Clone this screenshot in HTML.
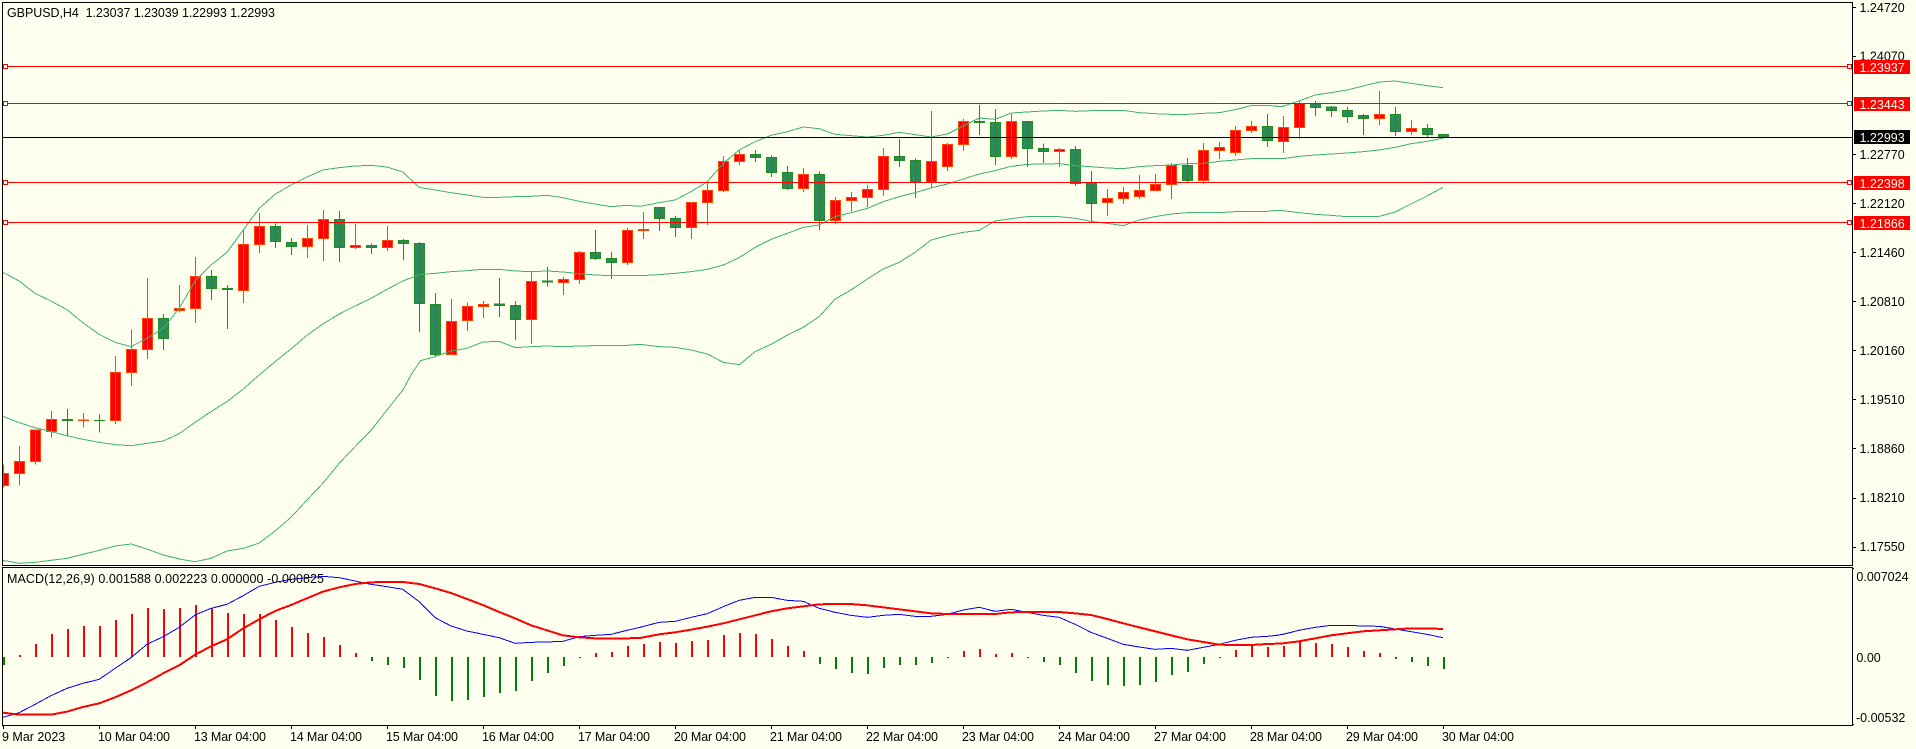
<!DOCTYPE html>
<html>
<head>
<meta charset="utf-8">
<title>GBPUSD,H4</title>
<style>
html,body{margin:0;padding:0;background:#fffff0;width:1916px;height:749px;overflow:hidden}
svg{display:block}
text{font-family:"Liberation Sans",sans-serif;font-size:12.5px;fill:#000}
.t text{fill:#fffff0}
.r path{fill:#f00;stroke:#ff4500;stroke-width:1;vector-effect:non-scaling-stroke}
.g path{fill:#2e8b57;stroke:#228b22;stroke-width:1;vector-effect:non-scaling-stroke}
.b polyline{fill:none;stroke:#3cb371;stroke-width:1;vector-effect:non-scaling-stroke}
.m polyline{fill:none;stroke:#00f;stroke-width:1;vector-effect:non-scaling-stroke}
.s polyline{fill:none;stroke:#f00;stroke-width:2;vector-effect:non-scaling-stroke}
.h{fill:none;stroke-width:2;vector-effect:non-scaling-stroke}
</style>
</head>
<body>
<svg width="1916" height="749" viewBox="0 0 1916 749" xmlns="http://www.w3.org/2000/svg" shape-rendering="crispEdges">
<rect width="1916" height="749" fill="#fffff0"/>

<!-- candles, y in 1/3 px -->
<g transform="scale(1,.33333)">
<g class="r">
<path d="M3.5 1393V1463M-1.5 1420h10V1457h-10z"/>
<path d="M19.5 1338V1457M14.5 1384h10V1420h-10z"/>
<path d="M35.5 1290V1394M30.5 1290h10V1385h-10z"/>
<path d="M51.5 1233V1313M46.5 1258h10V1295h-10z"/>
<path d="M83.5 1239V1283M78.5 1260h10V1261h-10z"/>
<path d="M115.5 1068V1272M110.5 1117h10V1262h-10z"/>
<path d="M131.5 988V1158M126.5 1048h10V1118h-10z"/>
<path d="M147.5 834V1077M142.5 955h10V1048h-10z"/>
<path d="M179.5 855V938M174.5 925h10V932h-10z"/>
<path d="M195.5 771V969M190.5 829h10V926h-10z"/>
<path d="M243.5 690V909M238.5 733h10V872h-10z"/>
<path d="M259.5 639V759M254.5 679h10V734h-10z"/>
<path d="M307.5 675V774M302.5 715h10V740h-10z"/>
<path d="M323.5 630V783M318.5 658h10V716h-10z"/>
<path d="M355.5 672V747M350.5 736h10V743h-10z"/>
<path d="M387.5 678V753M382.5 721h10V743h-10z"/>
<path d="M451.5 897V1065M446.5 964h10V1064h-10z"/>
<path d="M467.5 907V993M462.5 919h10V962h-10z"/>
<path d="M483.5 903V954M478.5 913h10V920h-10z"/>
<path d="M531.5 816V1032M526.5 844h10V959h-10z"/>
<path d="M563.5 831V885M558.5 838h10V848h-10z"/>
<path d="M579.5 753V852M574.5 757h10V839h-10z"/>
<path d="M627.5 684V795M622.5 691h10V788h-10z"/>
<path d="M643.5 636V717M638.5 688h10V692h-10z"/>
<path d="M691.5 607V717M686.5 607h10V683h-10z"/>
<path d="M707.5 544V675M702.5 571h10V607h-10z"/>
<path d="M723.5 468V576M718.5 484h10V572h-10z"/>
<path d="M739.5 450V495M734.5 463h10V485h-10z"/>
<path d="M803.5 504V576M798.5 523h10V566h-10z"/>
<path d="M835.5 591V672M830.5 601h10V662h-10z"/>
<path d="M851.5 576V634M846.5 592h10V602h-10z"/>
<path d="M867.5 555V621M862.5 568h10V593h-10z"/>
<path d="M883.5 444V588M878.5 469h10V569h-10z"/>
<path d="M931.5 333V565M926.5 484h10V546h-10z"/>
<path d="M947.5 429V513M942.5 433h10V500h-10z"/>
<path d="M963.5 357V453M958.5 364h10V434h-10z"/>
<path d="M1011.5 342V477M1006.5 364h10V470h-10z"/>
<path d="M1059.5 444V501M1054.5 448h10V455h-10z"/>
<path d="M1107.5 567V648M1102.5 595h10V608h-10z"/>
<path d="M1123.5 561V612M1118.5 577h10V596h-10z"/>
<path d="M1139.5 525V597M1134.5 571h10V590h-10z"/>
<path d="M1155.5 522V573M1150.5 553h10V572h-10z"/>
<path d="M1171.5 489V597M1166.5 496h10V554h-10z"/>
<path d="M1203.5 429V552M1198.5 451h10V542h-10z"/>
<path d="M1219.5 426V477M1214.5 442h10V452h-10z"/>
<path d="M1235.5 378V468M1230.5 391h10V458h-10z"/>
<path d="M1251.5 363V399M1246.5 379h10V392h-10z"/>
<path d="M1283.5 348V459M1278.5 382h10V425h-10z"/>
<path d="M1299.5 301V417M1294.5 311h10V383h-10z"/>
<path d="M1379.5 273V375M1374.5 343h10V356h-10z"/>
<path d="M1411.5 360V405M1406.5 385h10V395h-10z"/>
</g>
<g class="g">
<path d="M67.5 1227V1310M62.5 1258h10V1261h-10z"/>
<path d="M99.5 1243V1298M94.5 1261h10V1262h-10z"/>
<path d="M163.5 942V1050M158.5 955h10V1016h-10z"/>
<path d="M211.5 810V900M206.5 829h10V866h-10z"/>
<path d="M227.5 855V987M222.5 865h10V869h-10z"/>
<path d="M275.5 670V744M270.5 679h10V725h-10z"/>
<path d="M291.5 714V765M286.5 727h10V740h-10z"/>
<path d="M339.5 633V786M334.5 658h10V743h-10z"/>
<path d="M371.5 730V762M366.5 736h10V743h-10z"/>
<path d="M403.5 717V780M398.5 721h10V731h-10z"/>
<path d="M419.5 726V996M414.5 730h10V911h-10z"/>
<path d="M435.5 879V1070M430.5 913h10V1064h-10z"/>
<path d="M499.5 834V951M494.5 912h10V917h-10z"/>
<path d="M515.5 903V1020M510.5 916h10V959h-10z"/>
<path d="M547.5 801V860M542.5 843h10V846h-10z"/>
<path d="M595.5 690V780M590.5 757h10V776h-10z"/>
<path d="M611.5 756V837M606.5 775h10V788h-10z"/>
<path d="M659.5 621V693M654.5 622h10V656h-10z"/>
<path d="M675.5 648V711M670.5 655h10V683h-10z"/>
<path d="M755.5 450V486M750.5 463h10V473h-10z"/>
<path d="M771.5 466V531M766.5 472h10V518h-10z"/>
<path d="M787.5 498V570M782.5 517h10V566h-10z"/>
<path d="M819.5 514V690M814.5 523h10V662h-10z"/>
<path d="M899.5 417V501M894.5 469h10V482h-10z"/>
<path d="M915.5 475V594M910.5 481h10V546h-10z"/>
<path d="M979.5 315V405M974.5 364h10V368h-10z"/>
<path d="M995.5 327V495M990.5 367h10V470h-10z"/>
<path d="M1027.5 364V501M1022.5 364h10V446h-10z"/>
<path d="M1043.5 430V489M1038.5 445h10V455h-10z"/>
<path d="M1075.5 438V558M1070.5 448h10V551h-10z"/>
<path d="M1091.5 513V663M1086.5 549h10V611h-10z"/>
<path d="M1187.5 474V546M1182.5 496h10V542h-10z"/>
<path d="M1267.5 342V441M1262.5 379h10V422h-10z"/>
<path d="M1315.5 303V348M1310.5 311h10V323h-10z"/>
<path d="M1331.5 318V351M1326.5 321h10V332h-10z"/>
<path d="M1347.5 321V369M1342.5 331h10V350h-10z"/>
<path d="M1363.5 342V405M1358.5 346h10V356h-10z"/>
<path d="M1395.5 321V408M1390.5 343h10V395h-10z"/>
<path d="M1427.5 372V411M1422.5 385h10V404h-10z"/>
<path d="M1443.5 403V413M1438.5 403h10V413h-10z"/>
</g>
</g>

<!-- bollinger bands -->
<g class="b" transform="scale(.40816,.33333)">
<polyline points="7,817 47,843 86,880 125,903 165,930 203,968 243,1003 282,1027 321,1040 360,1015 400,985 439,925 478,843 517,795 556,757 596,690 635,625 674,583 713,555 752,531 791,510 831,503 870,498 909,496 948,501 987,516 1027,562 1066,570 1105,578 1144,585 1183,592 1223,592 1262,590 1301,589 1340,586 1379,593 1419,604 1458,612 1497,620 1536,616 1568,619"/>
<polyline points="635,1125 674,1085 713,1047 752,1006 791,972 831,942 870,918 909,895 948,868 987,843 1027,824 1066,820 1105,815 1144,812 1183,808 1223,808 1262,813 1301,815 1340,813 1379,816 1419,821 1458,825 1497,827 1536,827 1568,827"/>
<polyline points="1007,1125 1030,1082 1066,1070 1105,1053 1144,1045 1183,1026 1223,1024 1262,1043 1301,1040 1340,1038 1379,1040 1419,1038 1458,1037 1497,1037 1536,1036 1568,1033"/>
</g>
<g class="b" transform="translate(0,375) scale(.40816,.33333)">
<polyline points="7,124 47,143 86,158 125,170 164,182 203,193 243,202 282,209 321,212 360,205 400,198 439,176 478,142 517,110 556,80 596,42 635,0"/>
<polyline points="7,556 47,565 86,562 125,556 164,550 203,538 243,526 282,513 321,507 360,522 400,540 439,552 478,560 517,550 556,528 596,520 635,504 674,468 713,427 752,375 791,325 831,265 870,215 909,166 948,105 987,45 1007,0"/>
</g>
<g class="b" transform="translate(640,0) scale(.40816,.33333)">
<polyline points="0,619 47,608 86,600 125,575 165,545 204,490 243,450 282,425 321,406 361,395 400,381 439,386 478,403 517,407 557,411 596,406 635,397 674,404 713,411 753,402 792,378 831,354 870,358 909,339 949,336 988,333 1027,331 1066,334 1105,332 1145,331 1184,331 1223,338 1262,341 1301,343 1341,343 1380,340 1419,338 1458,329 1497,317 1537,316 1562,319"/>
<polyline points="0,827 47,824 86,820 125,815 165,808 204,795 243,773 282,742 321,718 361,700 400,682 439,675 478,650 517,638 557,625 596,605 635,590 674,578 713,564 753,552 792,537 831,522 870,512 909,499 949,493 988,492 1027,491 1066,497 1105,500 1145,504 1184,506 1223,500 1262,497 1301,495 1341,491 1380,490 1419,484 1458,480 1497,476 1537,475 1562,476"/>
<polyline points="0,1033 47,1040 86,1042 125,1050 165,1062 204,1087 243,1094 282,1055 321,1033 361,1005 400,982 439,950 478,897 517,870 557,837 596,807 635,787 674,757 713,720 753,707 792,697 831,691 870,663 909,656 949,650 988,650 1027,650 1066,655 1105,664 1145,670 1184,677 1223,660 1262,650 1301,642 1341,638 1380,638 1419,638 1458,635 1497,634 1537,634 1562,631"/>
</g>
<g class="b" transform="translate(1276,0) scale(.40816,.33333)">
<polyline points="0,320 17,319 56,303 96,285 135,278 174,270 213,258 253,246 292,243 331,250 370,257 409,263"/>
<polyline points="0,476 17,476 56,469 96,465 135,462 174,459 213,455 253,450 292,442 331,431 370,424 409,415"/>
<polyline points="0,631 17,632 56,638 96,643 135,646 174,650 213,650 253,649 292,636 331,612 370,588 409,562"/>
</g>

<!-- macd histogram -->
<g transform="translate(0,375) scale(1,.33333)">
<path class="h" stroke="#f00" d="M20 846V840M36 846V807M52 846V777M68 846V762M84 846V753M100 846V753M116 846V735M132 846V717M148 846V699M164 846V702M180 846V699M196 846V690M212 846V699M228 846V714M244 846V717M260 846V717M276 846V735M292 846V756M308 846V774M324 846V786M340 846V810M356 846V834M580 846V849M596 846V834M612 846V831M628 846V813M644 846V807M660 846V801M676 846V804M692 846V798M708 846V795M724 846V780M740 846V774M756 846V777M772 846V792M788 846V813M804 846V828M948 846V849M964 846V828M980 846V822M996 846V837M1012 846V834M1028 846V849M1220 846V849M1236 846V825M1252 846V813M1268 846V816M1284 846V813M1300 846V798M1316 846V804M1332 846V807M1348 846V816M1364 846V828M1380 846V834"/>
<path class="h" stroke="#008000" d="M4 846V870M372 846V858M388 846V870M404 846V879M420 846V915M436 846V963M452 846V978M468 846V975M484 846V966M500 846V954M516 846V948M532 846V918M548 846V894M564 846V873M820 846V867M836 846V882M852 846V894M868 846V897M884 846V879M900 846V870M916 846V870M932 846V864M1044 846V861M1060 846V870M1076 846V894M1092 846V918M1108 846V930M1124 846V933M1140 846V930M1156 846V921M1172 846V900M1188 846V891M1204 846V867M1396 846V852M1412 846V861M1428 846V873M1444 846V882"/>
</g>

<!-- macd lines -->
<g transform="translate(0,375) scale(.40816,.33333)">
<g class="m"><polyline points="7,1027 47,1013 86,988 125,962 164,940 203,925 243,913 282,880 321,848 360,808 400,785 439,757 478,720 517,700 556,688 596,662 635,634 674,622 713,613 752,608 791,604 831,608 870,618 909,628 948,635 987,643 1027,680 1066,728 1105,753 1144,768 1183,778 1223,788 1262,805 1301,802 1340,801 1379,799 1419,785 1458,781 1497,778 1536,766 1568,757"/></g>
<g class="s"><polyline points="7,1013 47,1019 86,1019 125,1019 164,1010 203,996 243,985 282,967 321,946 360,922 400,895 439,871 478,839 517,814 556,793 596,760 635,733 674,708 713,690 752,670 791,650 831,637 870,627 909,622 948,621 987,621 1027,627 1066,640 1105,654 1144,672 1183,690 1223,711 1262,730 1301,751 1340,766 1379,781 1419,787 1458,790 1497,791 1536,790 1568,789"/></g>
</g>
<g transform="translate(640,375) scale(.40816,.33333)">
<g class="m"><polyline points="0,757 47,742 86,739 125,727 165,716 204,695 243,676 282,667 321,667 361,676 400,679 439,700 478,712 517,721 557,727 596,721 635,718 674,724 713,724 753,718 792,705 831,697 870,709 909,703 949,712 988,721 1027,727 1066,748 1105,772 1145,790 1184,808 1223,816 1262,823 1301,820 1341,826 1380,817 1419,808 1458,796 1497,787 1537,784 1562,781"/></g>
<g class="s"><polyline points="0,789 47,778 86,772 125,764 165,755 204,745 243,733 282,721 321,709 361,700 400,694 439,688 478,687 517,687 557,691 596,697 635,703 674,709 713,715 753,717 792,717 831,717 870,717 909,712 949,711 988,711 1027,711 1066,715 1105,720 1145,732 1184,745 1223,757 1262,769 1301,781 1341,793 1380,801 1419,809 1458,810 1497,810 1537,807 1562,806"/></g>
</g>
<g transform="translate(1276,375) scale(.40816,.33333)">
<g class="m"><polyline points="0,781 17,778 56,766 96,757 135,751 174,751 213,753 253,754 292,762 331,770 370,778 409,788"/></g>
<g class="s"><polyline points="0,806 17,805 56,799 96,790 135,781 174,775 213,769 253,766 292,763 331,760 370,760 409,762"/></g>
</g>

<!-- horizontal lines -->
<g fill="#f00">
<rect x="3" y="66" width="1849" height="1"/>
<rect x="3" y="103" width="1849" height="1"/>
<rect x="3" y="182" width="1849" height="1"/>
<rect x="3" y="222" width="1849" height="1"/>
</g>
<rect x="3" y="137" width="1849" height="1" fill="#000"/>
<g fill="#fffff0" stroke="#f00" stroke-width="1">
<rect x="3.5" y="64.5" width="4" height="4"/>
<rect x="3.5" y="101.5" width="4" height="4"/>
<rect x="3.5" y="180.5" width="4" height="4"/>
<rect x="3.5" y="220.5" width="4" height="4"/>
<rect x="1847.5" y="64.5" width="4" height="4"/>
<rect x="1847.5" y="101.5" width="4" height="4"/>
<rect x="1847.5" y="180.5" width="4" height="4"/>
<rect x="1847.5" y="220.5" width="4" height="4"/>
</g>

<!-- frame -->
<rect x="0" y="0" width="2" height="749" fill="#fffff0"/>
<g fill="#000">
<rect x="2" y="2" width="1851" height="1"/>
<rect x="2" y="2" width="1" height="564"/>
<rect x="1852" y="2" width="1" height="564"/>
<rect x="2" y="565" width="1851" height="1"/>
<rect x="2" y="567" width="1851" height="1"/>
<rect x="2" y="567" width="1" height="159"/>
<rect x="1852" y="567" width="1" height="159"/>
<rect x="2" y="725" width="1851" height="1"/>
<!-- price ticks -->
<rect x="1853" y="7" width="3" height="1"/>
<rect x="1853" y="56" width="3" height="1"/>
<rect x="1853" y="154" width="3" height="1"/>
<rect x="1853" y="203" width="3" height="1"/>
<rect x="1853" y="252" width="3" height="1"/>
<rect x="1853" y="301" width="3" height="1"/>
<rect x="1853" y="350" width="3" height="1"/>
<rect x="1853" y="399" width="3" height="1"/>
<rect x="1853" y="448" width="3" height="1"/>
<rect x="1853" y="498" width="3" height="1"/>
<rect x="1853" y="547" width="3" height="1"/>
<rect x="1853" y="568" width="1" height="1"/>
<rect x="1853" y="724" width="1" height="1"/>
<!-- time ticks -->
<rect x="3" y="726" width="1" height="3"/>
<rect x="99" y="726" width="1" height="3"/>
<rect x="195" y="726" width="1" height="3"/>
<rect x="291" y="726" width="1" height="3"/>
<rect x="387" y="726" width="1" height="3"/>
<rect x="483" y="726" width="1" height="3"/>
<rect x="579" y="726" width="1" height="3"/>
<rect x="675" y="726" width="1" height="3"/>
<rect x="771" y="726" width="1" height="3"/>
<rect x="867" y="726" width="1" height="3"/>
<rect x="963" y="726" width="1" height="3"/>
<rect x="1059" y="726" width="1" height="3"/>
<rect x="1155" y="726" width="1" height="3"/>
<rect x="1251" y="726" width="1" height="3"/>
<rect x="1347" y="726" width="1" height="3"/>
<rect x="1443" y="726" width="1" height="3"/>
</g>

<!-- legends -->
<text x="7" y="17" xml:space="preserve" textLength="268">GBPUSD,H4  1.23037 1.23039 1.22993 1.22993</text>
<text x="7" y="583" textLength="317">MACD(12,26,9) 0.001588 0.002223 0.000000 -0.000825</text>

<!-- price axis -->
<g>
<text x="1859.5" y="12">1.24720</text>
<text x="1859.5" y="60.5">1.24070</text>
<text x="1859.5" y="159">1.22770</text>
<text x="1859.5" y="208">1.22120</text>
<text x="1859.5" y="257">1.21460</text>
<text x="1859.5" y="306">1.20810</text>
<text x="1859.5" y="355">1.20160</text>
<text x="1859.5" y="404">1.19510</text>
<text x="1859.5" y="453">1.18860</text>
<text x="1859.5" y="502">1.18210</text>
<text x="1859.5" y="551">1.17550</text>
<text x="1856.4" y="581">0.007024</text>
<text x="1856.4" y="662">0.00</text>
<text x="1856" y="722">-0.00532</text>
</g>
<g class="t">
<rect x="1854" y="60" width="56" height="14" fill="#f00"/>
<text x="1859.5" y="72">1.23937</text>
<rect x="1854" y="97" width="56" height="14" fill="#f00"/>
<text x="1859.5" y="109">1.23443</text>
<rect x="1854" y="130" width="56" height="14" fill="#000"/>
<text x="1859.5" y="142">1.22993</text>
<rect x="1854" y="176" width="56" height="14" fill="#f00"/>
<text x="1859.5" y="188">1.22398</text>
<rect x="1854" y="216" width="56" height="14" fill="#f00"/>
<text x="1859.5" y="228">1.21866</text>
</g>

<!-- time axis -->
<g>
<text x="2" y="741">9 Mar 2023</text>
<text x="98" y="741" textLength="72">10 Mar 04:00</text>
<text x="194" y="741" textLength="72">13 Mar 04:00</text>
<text x="290" y="741" textLength="72">14 Mar 04:00</text>
<text x="386" y="741" textLength="72">15 Mar 04:00</text>
<text x="482" y="741" textLength="72">16 Mar 04:00</text>
<text x="578" y="741" textLength="72">17 Mar 04:00</text>
<text x="674" y="741" textLength="72">20 Mar 04:00</text>
<text x="770" y="741" textLength="72">21 Mar 04:00</text>
<text x="866" y="741" textLength="72">22 Mar 04:00</text>
<text x="962" y="741" textLength="72">23 Mar 04:00</text>
<text x="1058" y="741" textLength="72">24 Mar 04:00</text>
<text x="1154" y="741" textLength="72">27 Mar 04:00</text>
<text x="1250" y="741" textLength="72">28 Mar 04:00</text>
<text x="1346" y="741" textLength="72">29 Mar 04:00</text>
<text x="1442" y="741" textLength="72">30 Mar 04:00</text>
</g>
</svg>
</body>
</html>
